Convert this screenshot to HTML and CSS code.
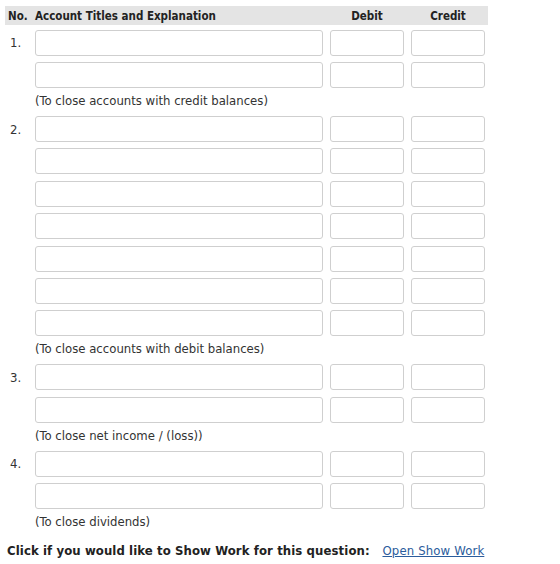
FILE: index.html
```html
<!DOCTYPE html>
<html lang="en">
<head>
  <meta charset="UTF-8" />
  <title>Closing Entries</title>
  <link rel="stylesheet" href="styles.css">
</head>
<body>
  <div class="journal">
    <div class="line head">
      <span class="num">No.</span>
      <span>Account Titles and Explanation</span>
      <span class="center">Debit</span>
      <span class="center">Credit</span>
    </div>

    <div class="line">
      <span class="num">1.</span>
      <input type="text" class="acct"><input type="text"><input type="text">
    </div>
    <div class="line">
      <span class="num"></span>
      <input type="text" class="acct"><input type="text"><input type="text">
    </div>
    <p class="note">(To close accounts with credit balances)</p>

    <div class="line">
      <span class="num">2.</span>
      <input type="text" class="acct"><input type="text"><input type="text">
    </div>
    <div class="line">
      <span class="num"></span>
      <input type="text" class="acct"><input type="text"><input type="text">
    </div>
    <div class="line">
      <span class="num"></span>
      <input type="text" class="acct"><input type="text"><input type="text">
    </div>
    <div class="line">
      <span class="num"></span>
      <input type="text" class="acct"><input type="text"><input type="text">
    </div>
    <div class="line">
      <span class="num"></span>
      <input type="text" class="acct"><input type="text"><input type="text">
    </div>
    <div class="line">
      <span class="num"></span>
      <input type="text" class="acct"><input type="text"><input type="text">
    </div>
    <div class="line">
      <span class="num"></span>
      <input type="text" class="acct"><input type="text"><input type="text">
    </div>
    <p class="note">(To close accounts with debit balances)</p>

    <div class="line">
      <span class="num">3.</span>
      <input type="text" class="acct"><input type="text"><input type="text">
    </div>
    <div class="line">
      <span class="num"></span>
      <input type="text" class="acct"><input type="text"><input type="text">
    </div>
    <p class="note">(To close net income / (loss))</p>

    <div class="line">
      <span class="num">4.</span>
      <input type="text" class="acct"><input type="text"><input type="text">
    </div>
    <div class="line">
      <span class="num"></span>
      <input type="text" class="acct"><input type="text"><input type="text">
    </div>
    <p class="note">(To close dividends)</p>
  </div>

  <p class="show-work">
    <b>Click if you would like to Show Work for this question:</b>
    <a href="#">Open Show Work</a>
  </p>
</body>
</html>
```

FILE: styles.css
```css
body {
  margin: 0;
  font-family: "DejaVu Sans Condensed", "DejaVu Sans", sans-serif;
  font-size: 13px;
  color: #333;
  background: #fff;
}
.journal {
  margin: 6px 0 0 5px;
  width: 483px;
}
.line {
  display: grid;
  grid-template-columns: 23px 288px 74px 74px;
  column-gap: 7px;
  align-items: center;
  height: 26px;
  margin-top: 6.4px;
}
.line.head {
  height: 19px;
  margin-top: 0;
  margin-bottom: -1.6px;
  background: #e4e4e4;
  font-size: 11.5px;
  font-weight: bold;
  color: #222;
}
.num {
  padding-left: 5px;
}
.head .num {
  padding-left: 3px;
}
.center {
  text-align: center;
}
input {
  box-sizing: border-box;
  width: 100%;
  height: 26px;
  margin: 0;
  border: 1px solid #cfcfcf;
  border-radius: 3px;
  background: #fff;
  font: inherit;
}
.note {
  margin: 0 0 0 30px;
  padding-top: 2px;
  height: 19.5px;
  line-height: 21.5px;
}
.show-work {
  margin: 11px 0 0 7px;
  line-height: 20px;
}
.show-work b {
  color: #222;
  letter-spacing: 0.1px;
  margin-right: 9px;
}
.show-work a {
  color: #2b5c9c;
  letter-spacing: 0.15px;
}
```
